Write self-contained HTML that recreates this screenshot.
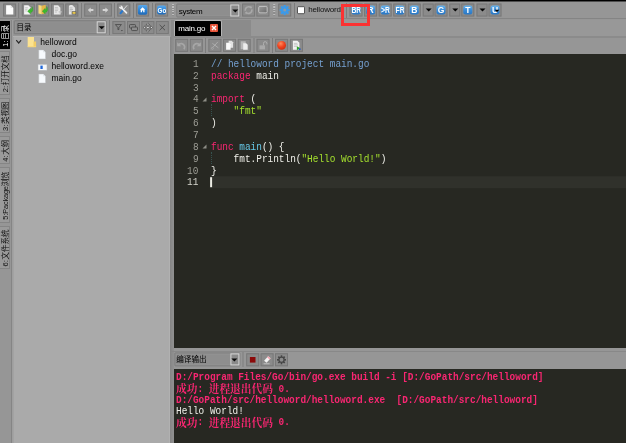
<!DOCTYPE html>
<html lang="zh">
<head>
<meta charset="utf-8">
<title>LiteIDE - helloword</title>
<style>
html,body{margin:0;padding:0;}
body{width:626px;height:443px;overflow:hidden;background:#969696;position:relative;will-change:transform;
 font-family:"Liberation Sans","Noto Sans CJK SC",sans-serif;font-size:9px;color:#111;}
.a{position:absolute;}
#topline{left:0;top:0;width:626px;height:1px;background:#000;border-bottom:1px solid #4e4e4e;}
.tb,.tb2,.tb3,.tb4{position:absolute;width:11px;height:11px;border:1px solid #787878;background:#8b8b8b;}

.tb svg,.tb2 svg,.tb3 svg,.tb4 svg{position:absolute;left:0;top:0;}
.sep{position:absolute;width:1.4px;height:15px;background:#7c7c7c;}
.hdl{position:absolute;width:2px;height:12px;background:repeating-linear-gradient(#bdbdbd 0 1.2px,#8c8c8c 1.2px 2.4px);}
.combo{position:absolute;height:12px;border:1px solid #7d7d7d;background:#8e8e8e;border-radius:1px;box-shadow:inset 0 0 0 1px #949494;}
.combo span{position:absolute;left:1.5px;top:.5px;line-height:12px;font-size:8px;letter-spacing:-.3px;color:#000;white-space:nowrap;}
.combo i{position:absolute;right:0;top:0;width:7px;height:10px;border:1px solid #d6d6d6;background:#8a8a8a;}
.combo i:after{content:"";position:absolute;left:.5px;top:3.8px;border:3px solid transparent;border-top:3.3px solid #080808;border-bottom:0;}
.bl{position:absolute;top:1px;left:.7px;width:9.6px;height:9.4px;border-radius:2.2px;background:linear-gradient(#6ab3ea,#3a8cd8 50%,#2a76c2);color:#fff;overflow:hidden;text-align:center;}
.bl b{position:absolute;left:-5px;right:-5px;top:0;display:block;font-size:8.5px;line-height:9.4px;font-weight:bold;text-align:center;}
.dd{position:absolute;width:9px;height:11px;border:1px solid #787878;background:#8b8b8b;}
.dd:after{content:"";position:absolute;left:1.6px;top:4px;border:3px solid transparent;border-top:3.2px solid #050505;border-bottom:0;}
.vt{position:absolute;left:0;width:10px;border:1px solid #858585;border-left:0;background:#9a9a9a;box-sizing:border-box;border-radius:0 1px 1px 0;}
.vt span{position:absolute;left:.6px;word-spacing:-1.5px;padding-right:1.5px;box-sizing:border-box;transform-origin:0 0;transform:rotate(-90deg);white-space:nowrap;font-size:7.5px;line-height:9px;height:9px;color:#111;text-align:center;}
#tree{left:13px;top:36px;width:157px;height:417px;background:#aaa;box-shadow:inset -1px 0 #b1b1b1,inset 0 1px #b1b1b1,inset 1px 0 #a2a2a2;}
.tr{position:absolute;left:0;height:12px;line-height:12px;font-size:8.5px;color:#000;white-space:nowrap;}
#ed{left:174px;top:54px;width:462px;height:294px;background:#272822;overflow:hidden;}
.mono{font-family:"Liberation Mono","Noto Sans CJK SC",monospace;font-size:10.3px;white-space:pre;transform-origin:0 0;transform:scaleX(.915);display:block;margin-top:.8px;position:absolute;line-height:12px;height:12px;}
.k{color:#f92672}.c{color:#75a0d0}.s{color:#a6e22e}.f{color:#66c8e8}.w{color:#f0f0ea}
.z{font-size:11.7px;line-height:12px;font-weight:bold;position:relative;top:1.4px}
#out{left:174px;top:369px;width:462px;height:84px;background:#272822;overflow:hidden;}
.o{font-family:"Liberation Mono","Noto Serif CJK SC","Noto Sans CJK SC",monospace;font-size:10.3px;white-space:pre;transform-origin:0 0;transform:scaleX(.915);position:absolute;left:2px;margin-top:.3px;line-height:12px;height:12px;color:#f92672;font-weight:bold;}
#maintb,#vtabs,#side,#edwrap,#outwrap{filter:blur(.35px);}
</style>
</head>
<body>
<div id="topline" class="a"></div>
<!-- main toolbar -->
<div id="maintb">
<div class="tb" style="left:3px;top:3px;transform:translate(0.1px,0.55px);"><svg width="11" height="11" viewBox="0 0 11 11"><path d="M2 .8h4.6l2.6 2.6v6.6h-7.2z" fill="#fdfdfd"/><path d="M6.6 .8v2.6h2.6" fill="#e2e2e2"/></svg></div>
<div class="sep" style="left:18px;top:3px;transform:translate(0.2px,0px);"></div>
<div class="tb" style="left:21px;top:3px;transform:translate(0.8px,0.55px);"><svg width="11" height="11" viewBox="0 0 11 11"><path d="M1.3 .6h4.2l2 2v7.4h-6.2z" fill="#f2f2f2"/><path d="M2.4 3.2h2.6M2.4 4.8h2.2M2.4 6.4h1.6" stroke="#b4b4b4" stroke-width=".7"/><path d="M4.7 6.6L7.7 3.7L7.7 5.3C8.8 5.1 9.3 4 9.1 1.9C10.8 3.5 10.6 7.7 7.7 7.9L7.7 9.4Z" fill="#3db830" stroke="#2c9a24" stroke-width=".3"/></svg></div>
<div class="tb" style="left:36px;top:3px;transform:translate(0.3px,0.55px);"><svg width="11" height="11" viewBox="0 0 11 11"><path d="M1.2 .4l3.3 .8v8.6l-3.3-.9z" fill="#f8dc7c"/><path d="M4.5 1.2l3.9-1v8.2l-3.9 1.4z" fill="#e6b645"/><path d="M4.9 6.6L7.9 3.7L7.9 5.3C9.0 5.1 9.5 4 9.3 1.9C11.0 3.5 10.8 7.7 7.9 7.9L7.9 9.4Z" fill="#3db830" stroke="#2c9a24" stroke-width=".3"/></svg></div>
<div class="tb" style="left:50px;top:3px;transform:translate(0.9px,0.55px);"><svg width="11" height="11" viewBox="0 0 11 11"><path d="M2 .8h4.2l2.3 2.3v6.9h-6.5z" fill="#e6e6e6"/><path d="M3 3h3M3 4.5h3.5M3 6h3M3 7.5h2" stroke="#a9a9a9" stroke-width=".6"/><path d="M6.8 6.8h3v1.2h-1v1.8h-1v-1.8h-1z" fill="#c4c4c4"/></svg></div>
<div class="tb" style="left:65px;top:3px;transform:translate(0.3px,0.55px);"><svg width="11" height="11" viewBox="0 0 11 11"><path d="M2.6 1.6c.8-1.4 3.6-1.4 4.6 0l1.6 1.6v6.8h-6.2z" fill="#e4e4e4"/><path d="M3.4 3.4h2.8M3.4 5h3.3M3.4 6.5h2" stroke="#a0a0a0" stroke-width=".6"/><rect x="5.4" y="6.6" width="4.6" height="3.4" rx=".5" fill="#5a5a5a"/><rect x="6.2" y="7.3" width="3" height="2" fill="#e9c74b"/></svg></div>
<div class="sep" style="left:81px;top:3px;"></div>
<div class="tb" style="left:84px;top:3px;transform:translate(0.2px,0.55px);"><svg width="11" height="11" viewBox="0 0 11 11"><path d="M2.6 5.5l2.9-2.6v1.6h2.7v2h-2.7v1.6z" fill="#d4d4d4"/></svg></div>
<div class="tb" style="left:98px;top:3px;transform:translate(0.9px,0.55px);"><svg width="11" height="11" viewBox="0 0 11 11"><path d="M8.4 5.5l-2.9-2.6v1.6h-2.7v2h2.7v1.6z" fill="#d4d4d4"/></svg></div>
<div class="sep" style="left:114px;top:3px;"></div>
<div class="tb" style="left:117px;top:3px;transform:translate(0.3px,0.55px);"><svg width="11" height="11" viewBox="0 0 11 11"><path d="M8.6 1.1L5.3 4.9" stroke="#e4e4e4" stroke-width=".9" stroke-linecap="round"/><path d="M5 5.3L2.2 8.7" stroke="#2b78cc" stroke-width="2.1" stroke-linecap="round"/><path d="M3 3L8.2 8.4" stroke="#ededed" stroke-width="1.7" stroke-linecap="round"/><circle cx="2.7" cy="2.7" r="1.7" fill="#ededed"/><path d="M2.7 2.7L.3 1.7L1.7 .3Z" fill="#8d8d8d"/></svg></div>
<div class="sep" style="left:133px;top:3px;"></div>
<div class="tb" style="left:136px;top:3px;transform:translate(0.1px,0.55px);"><svg width="11" height="11" viewBox="0 0 11 11"><defs><linearGradient id="hg" x1="0" y1="0" x2="0" y2="1"><stop offset="0" stop-color="#58a8ec"/><stop offset=".5" stop-color="#2f86d8"/><stop offset="1" stop-color="#1f69b6"/></linearGradient></defs><rect x=".8" y=".4" width="9.4" height="9.8" rx="1.8" fill="url(#hg)"/><path d="M5.5 2.6l2.7 2.5h-.8v2.5h-1.3v-1.6h-1.2v1.6h-1.3v-2.5h-.8z" fill="#fff"/></svg></div>
<div class="sep" style="left:152px;top:3px;"></div>
<div class="tb" style="left:155px;top:3px;transform:translate(0.1px,0.55px);"><div class="bl" style="background:linear-gradient(#58a8ec,#2f86d8 50%,#1f69b6)"><b style="transform:scaleX(.8);font-size:7.8px;top:-.5px">Go</b></div></div>
<div class="hdl" style="left:172px;top:4px;"></div>
<div class="combo" style="left:176px;top:3px;transform:translate(0.3px,0.5px);width:62.2px"><span>system</span><i></i></div>
<div class="tb" style="left:242px;top:3px;transform:translate(0.1px,0.55px);"><svg width="11" height="11" viewBox="0 0 11 11"><path d="M2.3 6.2A3.3 3.3 0 0 1 8 3.3" fill="none" stroke="#a9a9a9" stroke-width="1.5"/><path d="M8.7 4.8A3.3 3.3 0 0 1 3 7.7" fill="none" stroke="#a9a9a9" stroke-width="1.5"/><path d="M6.8 1.6l2.6 .6-1.6 2.2z" fill="#a9a9a9"/><path d="M4.2 9.4l-2.6-.6 1.6-2.2z" fill="#a9a9a9"/></svg></div>
<div class="tb" style="left:256px;top:3px;transform:translate(0.4px,0.55px);"><svg width="11" height="11" viewBox="0 0 11 11"><defs><linearGradient id="wg" x1="0" y1="0" x2="1" y2="1"><stop offset="0" stop-color="#9c9c9c"/><stop offset="1" stop-color="#696969"/></linearGradient></defs><rect x="1.3" y="1.9" width="8.4" height="6.4" rx="1.2" fill="url(#wg)" stroke="#c6c6c6" stroke-width=".9"/></svg></div>
<div class="hdl" style="left:273px;top:4px;transform:translate(0.2px,0px);"></div>
<div class="tb" style="left:278px;top:3px;transform:translate(0.2px,0.55px);"><svg width="11" height="11" viewBox="0 0 11 11"><rect x="4.4" y=".4" width="2.2" height="2.6" rx=".4" fill="#3b9aea" transform="rotate(0 5.5 5.5)"/><rect x="4.4" y=".4" width="2.2" height="2.6" rx=".4" fill="#3b9aea" transform="rotate(45 5.5 5.5)"/><rect x="4.4" y=".4" width="2.2" height="2.6" rx=".4" fill="#3b9aea" transform="rotate(90 5.5 5.5)"/><rect x="4.4" y=".4" width="2.2" height="2.6" rx=".4" fill="#3b9aea" transform="rotate(135 5.5 5.5)"/><rect x="4.4" y=".4" width="2.2" height="2.6" rx=".4" fill="#3b9aea" transform="rotate(180 5.5 5.5)"/><rect x="4.4" y=".4" width="2.2" height="2.6" rx=".4" fill="#3b9aea" transform="rotate(225 5.5 5.5)"/><rect x="4.4" y=".4" width="2.2" height="2.6" rx=".4" fill="#3b9aea" transform="rotate(270 5.5 5.5)"/><rect x="4.4" y=".4" width="2.2" height="2.6" rx=".4" fill="#3b9aea" transform="rotate(315 5.5 5.5)"/><circle cx="5.5" cy="5.5" r="3.5" fill="#3b9aea"/><circle cx="5.5" cy="5.5" r="1.5" fill="#8b9aa8"/></svg></div>
<div class="sep" style="left:294px;top:3px;"></div>
<div class="a" style="left:297px;top:6px;transform:translate(0px,0.2px);width:6px;height:6px;background:#fff;border:1px solid #555;border-radius:1px"></div>
<div class="a" style="left:308.3px;top:4px;line-height:12px;font-size:8px;letter-spacing:-.2px;color:#151515">helloword</div>
<div class="sep" style="left:346px;top:3px;"></div>
<div class="tb" style="left:349px;top:3px;transform:translate(0.5px,0.55px);"><div class="bl"><b style="transform:scaleX(.8)">BR</b></div></div>
<div class="tb" style="left:364px;top:3px;transform:translate(0.1px,0.55px);"><div class="bl"><b>R</b></div></div>
<div class="tb" style="left:378px;top:3px;transform:translate(0.7px,0.55px);"><div class="bl"><b style="transform:scaleX(.8)">&gt;R</b></div></div>
<div class="tb" style="left:393px;top:3px;transform:translate(0.3px,0.55px);"><div class="bl"><b style="transform:scaleX(.8)">FR</b></div></div>
<div class="tb" style="left:407px;top:3px;transform:translate(0.8px,0.55px);"><div class="bl"><b>B</b></div></div>
<div class="dd" style="left:422px;top:3px;transform:translate(0.7px,0.55px);"></div>
<div class="tb" style="left:434px;top:3px;transform:translate(0.5px,0.55px);"><div class="bl"><b>G</b></div></div>
<div class="dd" style="left:449px;top:3px;transform:translate(0.3px,0.55px);"></div>
<div class="tb" style="left:461px;top:3px;transform:translate(0.3px,0.55px);"><div class="bl"><b>T</b></div></div>
<div class="dd" style="left:476px;top:3px;transform:translate(0.5px,0.55px);"></div>
<div class="tb" style="left:488px;top:3px;transform:translate(0.5px,0.55px);"><div class="bl"><b>U</b></div><svg style="left:4.8px;top:5.4px" width="5" height="3" viewBox="0 0 5 3"><path d="M0 0h5l-2.5 2.8z" fill="#000"/></svg></div>
<div class="a" style="left:0;top:18px;width:626px;height:1px;background:#848484"></div>
</div>
<!-- left vertical tab strip -->
<div id="vtabs">
<div class="a" style="left:11px;top:20px;width:1px;height:423px;background:#858585"></div>
<div class="a" style="left:12px;top:20px;width:1px;height:423px;background:#9e9e9e"></div>
<div class="vt" style="top:21px;height:28px;background:#000;border-color:#000;"><span style="width:26px;top:26px;color:#fff;">1: 目录</span></div>
<div class="vt" style="top:51px;height:44px;"><span style="width:42px;top:42px;">2: 打开文档</span></div>
<div class="vt" style="top:98px;height:35px;"><span style="width:33px;top:33px;">3: 类视图</span></div>
<div class="vt" style="top:136px;height:28px;"><span style="width:26px;top:26px;">4: 大纲</span></div>
<div class="vt" style="top:167px;height:56px;"><span style="width:54px;top:54px;letter-spacing:-.25px;">5: Package浏览</span></div>
<div class="vt" style="top:225.5px;height:43.5px;"><span style="width:41.5px;top:41.5px;">6: 文件系统</span></div>
</div>
<!-- sidebar -->
<div id="side">
<div class="combo" style="left:13px;top:20px;transform:translate(0.7px,0.3px);width:91.3px;height:11.7px"><span style="left:1.8px;top:1.3px;font-size:7.5px;letter-spacing:0">目录</span><i></i></div>
<div class="sep" style="left:109px;top:20px;"></div>
<div class="tb2" style="left:112px;top:21px;transform:translate(0.4px,0.05px);"><svg width="11" height="11" viewBox="0 0 11 11"><path d="M2 2.5h6l-2.5 3v2h-1v-2z" fill="none" stroke="#444" stroke-width=".8"/><path d="M7.5 8l2 0-1 1.2z" fill="#444"/></svg></div>
<div class="tb2" style="left:127px;top:21px;transform:translate(0px,0.05px);"><svg width="11" height="11" viewBox="0 0 11 11"><rect x="1.5" y="2.5" width="6" height="3.5" rx=".8" fill="none" stroke="#444" stroke-width=".8"/><rect x="3.5" y="5" width="6" height="3.5" rx=".8" fill="#8d8d8d" stroke="#444" stroke-width=".8"/></svg></div>
<div class="tb2" style="left:141px;top:21px;transform:translate(0.4px,0.05px);"><svg width="11" height="11" viewBox="0 0 11 11"><path d="M5.5 .8l1.8 2h-3.6zM5.5 10.2l1.8-2h-3.6zM.8 5.5l2-1.8v3.6zM10.2 5.5l-2-1.8v3.6z" fill="#ececec" stroke="#3a3a3a" stroke-width=".6"/><circle cx="5.5" cy="5.5" r="1.2" fill="#ececec" stroke="#3a3a3a" stroke-width=".6"/></svg></div>
<div class="tb2" style="left:155px;top:21px;transform:translate(0.8px,0.05px);"><svg width="11" height="11" viewBox="0 0 11 11"><path d="M2.8 2.8l5.4 5.4M8.2 2.8l-5.4 5.4" stroke="#4a4a4a" stroke-width=".9"/></svg></div>
<div id="tree" class="a">
<svg class="a" style="left:2px;top:3px;transform:translate(0.7px,0.6px);" width="6" height="5" viewBox="0 0 6 5"><path d="M.5 .6l2.5 2.8 2.5-2.8" fill="none" stroke="#2c2c2c" stroke-width="1.2"/></svg>
<div class="a" style="left:14px;top:0px;transform:translate(0.2px,0.6px);"><svg width="10" height="11" viewBox="0 0 10 11"><path d="M.4 .4h6.4v10.2h-6.4z" fill="#fbe291"/><path d="M6.3 4.8h2.6v5.8h-2.6z" fill="#f2cd66"/><path d="M.4 9.6h8.5v1h-8.5z" fill="#f6d678"/></svg></div><div class="tr" style="left:27.3px;top:0px">helloword</div>
<div class="a" style="left:25px;top:13px;transform:translate(0px,0.4px);"><svg width="9" height="10" viewBox="0 0 9 10"><path d="M.8 .5h4.4l2.3 2.3v6.7h-6.7z" fill="#f7fafd" stroke="#bfc3c7" stroke-width=".5"/><path d="M5.2 .5v2.3h2.3" fill="#dde2e6"/></svg></div><div class="tr" style="left:38.5px;top:12px">doc.go</div>
<div class="a" style="left:24px;top:26px;transform:translate(0.5px,0.8px);"><svg width="10" height="7" viewBox="0 0 10 7"><rect x=".5" y=".5" width="9" height="6" fill="#f6f8fa" stroke="#b9bcc0" stroke-width=".6"/><rect x="2.9" y="1.8" width="2.3" height="3.4" fill="#1f66d8"/></svg></div><div class="tr" style="left:38.5px;top:24px">helloword.exe</div>
<div class="a" style="left:25px;top:37px;transform:translate(0px,0.5px);"><svg width="9" height="10" viewBox="0 0 9 10"><path d="M.8 .5h4.4l2.3 2.3v6.7h-6.7z" fill="#f7fafd" stroke="#bfc3c7" stroke-width=".5"/><path d="M5.2 .5v2.3h2.3" fill="#dde2e6"/></svg></div><div class="tr" style="left:38.5px;top:36px">main.go</div>
</div>
</div>
<!-- editor -->
<div id="edwrap">
<div class="a" style="left:170.5px;top:19.6px;width:80.5px;height:17px;background:#8b8b8b"></div>
<div class="a" style="left:251px;top:20px;width:375px;height:16px;background:#989898"></div>
<div class="a" style="left:173.8px;top:20px;width:47.8px;height:16px;background:#000;border:1px solid #b5b5b5;border-bottom:0;border-radius:2px 2px 0 0;box-sizing:border-box"><span class="a" style="left:3.5px;top:2px;line-height:12px;font-size:8px;letter-spacing:-.2px;color:#fff">main.go</span><span class="a" style="left:34.8px;top:3.3px;width:8px;height:8px;background:#e8553a;border-radius:1px"><svg class="a" style="left:0;top:0" width="8" height="8" viewBox="0 0 8 8"><path d="M2 2l4 4M6 2l-4 4" stroke="#fff" stroke-width="1.4"/></svg></span></div>
<div class="a" style="left:171px;top:36px;width:455px;height:1.6px;background:#8b8b8b"></div>
<div class="tb3" style="left:175px;top:38px;transform:translate(0.2px,0.85px);"><svg width="11" height="11" viewBox="0 0 11 11"><path d="M2 5.5c1.5-2.5 5.5-2.5 6.5 1.5 0 1-.3 1.8-.8 2.5" fill="none" stroke="#a6a6a6" stroke-width="1.7"/><path d="M1 2.5v4h4z" fill="#a8a8a8"/></svg></div>
<div class="tb3" style="left:189px;top:38px;transform:translate(0.8px,0.85px);"><svg width="11" height="11" viewBox="0 0 11 11"><path d="M9 5.5c-1.5-2.5-5.5-2.5-6.5 1.5 0 1 .3 1.8.8 2.5" fill="none" stroke="#a6a6a6" stroke-width="1.7"/><path d="M10 2.5v4h-4z" fill="#a8a8a8"/></svg></div>
<div class="tb3" style="left:208px;top:38px;transform:translate(0.4px,0.85px);"><svg width="11" height="11" viewBox="0 0 11 11"><path d="M8.5 2l-5 5.5M3 3.5l6 4.5" stroke="#b5b5b5" stroke-width=".8"/><circle cx="3" cy="8.5" r="1" fill="none" stroke="#b5b5b5" stroke-width=".6"/></svg></div>
<div class="tb3" style="left:223px;top:38px;transform:translate(0.1px,0.85px);"><svg width="11" height="11" viewBox="0 0 11 11"><path d="M4.5 1h3l1.5 1.5v5.5h-4.5z" fill="#e2e2e2"/><path d="M2 3h3l1.5 1.5v5.5h-4.5z" fill="#fafafa"/></svg></div>
<div class="tb3" style="left:237px;top:38px;transform:translate(0.7px,0.85px);"><svg width="11" height="11" viewBox="0 0 11 11"><path d="M2 1.5h5v8h-5z" fill="#b9b9b9"/><path d="M4.5 3.5h3l1.5 1.5v5h-4.5z" fill="#ededed"/></svg></div>
<div class="tb3" style="left:256px;top:38px;transform:translate(0.5px,0.85px);"><svg width="11" height="11" viewBox="0 0 11 11"><rect x="2" y="5.5" width="5.5" height="4" fill="#a9a9a9"/><path d="M6 5.5v-2a1.7 1.7 0 0 1 3.4 0v1" fill="none" stroke="#b0b0b0" stroke-width="1"/></svg></div>
<div class="tb3" style="left:275px;top:38px;transform:translate(0.1px,0.85px);"><svg width="11" height="11" viewBox="0 0 11 11"><defs><radialGradient id="rg" cx=".4" cy=".3" r=".8"><stop offset="0" stop-color="#ff8a5c"/><stop offset=".5" stop-color="#f0431f"/><stop offset="1" stop-color="#c62a10"/></radialGradient></defs><circle cx="5.5" cy="5.5" r="4.4" fill="url(#rg)"/></svg></div>
<div class="tb3" style="left:289px;top:38px;transform:translate(0.9px,0.85px);"><svg width="11" height="11" viewBox="0 0 11 11"><path d="M2 1h4.5l2 2v7h-6.5z" fill="#f1f1f1"/><path d="M3 3.5h3.5M3 5h4M3 6.5h3" stroke="#aaa" stroke-width=".6"/><path d="M6 6.5l3.5 2-3.5 2z" fill="#2ea32a"/><circle cx="8.8" cy="9.5" r="1" fill="#2a56c8"/></svg></div>
<div class="sep" style="left:205px;top:38px;"></div>
<div class="sep" style="left:253px;top:38px;transform:translate(0.5px,0px);"></div>
<div class="sep" style="left:272px;top:38px;"></div>
<div class="a" style="left:170px;top:37px;width:4px;height:406px;background:linear-gradient(to right,#848484,#8d8d8d 60%,#909090)"></div>
<div id="ed" class="a">
<div class="a" style="left:35px;top:122px;transform:translate(0.8px,0.2px);width:430px;height:12.2px;background:#30312b"></div>
<div class="mono" style="left:18.54px;top:3.00px;color:#9e9e96">1</div>
<div class="mono" style="left:37px;top:3.00px"><span class="c">// helloword project main.go</span></div>
<div class="mono" style="left:18.54px;top:14.87px;color:#9e9e96">2</div>
<div class="mono" style="left:37px;top:14.87px"><span class="k">package</span> <span class="w">main</span></div>
<div class="mono" style="left:18.54px;top:26.74px;color:#9e9e96">3</div>
<div class="mono" style="left:18.54px;top:38.61px;color:#9e9e96">4</div>
<div class="mono" style="left:37px;top:38.61px"><span class="k">import</span> <span class="w">(</span></div>
<div class="mono" style="left:18.54px;top:50.48px;color:#9e9e96">5</div>
<div class="mono" style="left:37px;top:50.48px">    <span class="s">"fmt"</span></div>
<div class="mono" style="left:18.54px;top:62.35px;color:#9e9e96">6</div>
<div class="mono" style="left:37px;top:62.35px"><span class="w">)</span></div>
<div class="mono" style="left:18.54px;top:74.22px;color:#9e9e96">7</div>
<div class="mono" style="left:18.54px;top:86.09px;color:#9e9e96">8</div>
<div class="mono" style="left:37px;top:86.09px"><span class="k">func</span> <span class="f">main</span><span class="w">() {</span></div>
<div class="mono" style="left:18.54px;top:97.96px;color:#9e9e96">9</div>
<div class="mono" style="left:37px;top:97.96px">    <span class="w">fmt.Println(</span><span class="s">"Hello World!"</span><span class="w">)</span></div>
<div class="mono" style="left:12.88px;top:109.83px;color:#9e9e96">10</div>
<div class="mono" style="left:37px;top:109.83px"><span class="w">}</span></div>
<div class="mono" style="left:12.88px;top:121.70px;color:#d6d6ce">11</div>
<svg class="a" style="left:27.5px;top:42.61px" width="5" height="5" viewBox="0 0 5 5"><path d="M4.5 .5v4h-4z" fill="#8d8d86"/></svg>
<svg class="a" style="left:27.5px;top:90.09px" width="5" height="5" viewBox="0 0 5 5"><path d="M4.5 .5v4h-4z" fill="#8d8d86"/></svg>
<div class="a" style="left:37px;top:50.48px;width:0;height:12px;border-left:1px dotted #36524f"></div>
<div class="a" style="left:37px;top:97.96px;width:0;height:12px;border-left:1px dotted #36524f"></div>
<div class="a" style="left:36px;top:123px;transform:translate(0.1px,0.2px);width:1.8px;height:10.4px;background:#ecece4"></div>
</div>
</div>
<!-- output -->
<div id="outwrap">
<div class="a" style="left:171px;top:350.6px;width:455px;height:1px;background:#888"></div>
<div class="combo" style="left:174px;top:352px;transform:translate(0.4px,0.4px);width:63.5px"><span style="left:.8px;top:1px;font-size:7.6px;letter-spacing:0">编译输出</span><i></i></div>
<div class="sep" style="left:242px;top:352px;transform:translate(0.5px,0px);"></div>
<div class="tb4" style="left:246px;top:353px;transform:translate(0.2px,0.3px);"><svg width="11" height="11" viewBox="0 0 11 11"><rect x="2.7" y="2.7" width="5.6" height="5.6" fill="#8b0a0a"/></svg></div>
<div class="tb4" style="left:260px;top:353px;transform:translate(0.6px,0.3px);"><svg width="11" height="11" viewBox="0 0 11 11"><path d="M2.5 6.5l4-4.5 2.5 2-4 4.5z" fill="#f4f4f4"/><path d="M6.5 2l2.5 2-1 1.2-2.5-2z" fill="#f3a3b0"/><path d="M2 9.5h6" stroke="#cfcfcf" stroke-width=".8"/></svg></div>
<div class="tb4" style="left:275px;top:353px;transform:translate(0px,0.3px);"><svg width="11" height="11" viewBox="0 0 11 11"><rect x="4.7" y="1" width="1.6" height="1.8" fill="#454545" transform="rotate(0 5.5 5.5)"/><rect x="4.7" y="1" width="1.6" height="1.8" fill="#454545" transform="rotate(45 5.5 5.5)"/><rect x="4.7" y="1" width="1.6" height="1.8" fill="#454545" transform="rotate(90 5.5 5.5)"/><rect x="4.7" y="1" width="1.6" height="1.8" fill="#454545" transform="rotate(135 5.5 5.5)"/><rect x="4.7" y="1" width="1.6" height="1.8" fill="#454545" transform="rotate(180 5.5 5.5)"/><rect x="4.7" y="1" width="1.6" height="1.8" fill="#454545" transform="rotate(225 5.5 5.5)"/><rect x="4.7" y="1" width="1.6" height="1.8" fill="#454545" transform="rotate(270 5.5 5.5)"/><rect x="4.7" y="1" width="1.6" height="1.8" fill="#454545" transform="rotate(315 5.5 5.5)"/><circle cx="5.5" cy="5.5" r="2.6" fill="none" stroke="#454545" stroke-width="1.3"/></svg></div>
<div id="out" class="a">
<div class="o" style="top:2.00px;">D:/Program Files/Go/bin/go.exe build -i [D:/GoPath/src/helloword]</div>
<div class="o" style="top:13.30px;"><span class="z">成功</span>: <span class="z">进程退出代码</span> 0.</div>
<div class="o" style="top:24.60px;">D:/GoPath/src/helloword/helloword.exe  [D:/GoPath/src/helloword]</div>
<div class="o" style="top:35.90px;color:#f0f0ea;font-weight:normal;">Hello World!</div>
<div class="o" style="top:47.20px;"><span class="z">成功</span>: <span class="z">进程退出代码</span> 0.</div>
</div>
</div>
<!-- annotation rectangle -->
<div class="a" style="z-index:9;left:341px;top:4px;width:23px;height:15.7px;border:3px solid #fb3232"></div>
</body>
</html>
